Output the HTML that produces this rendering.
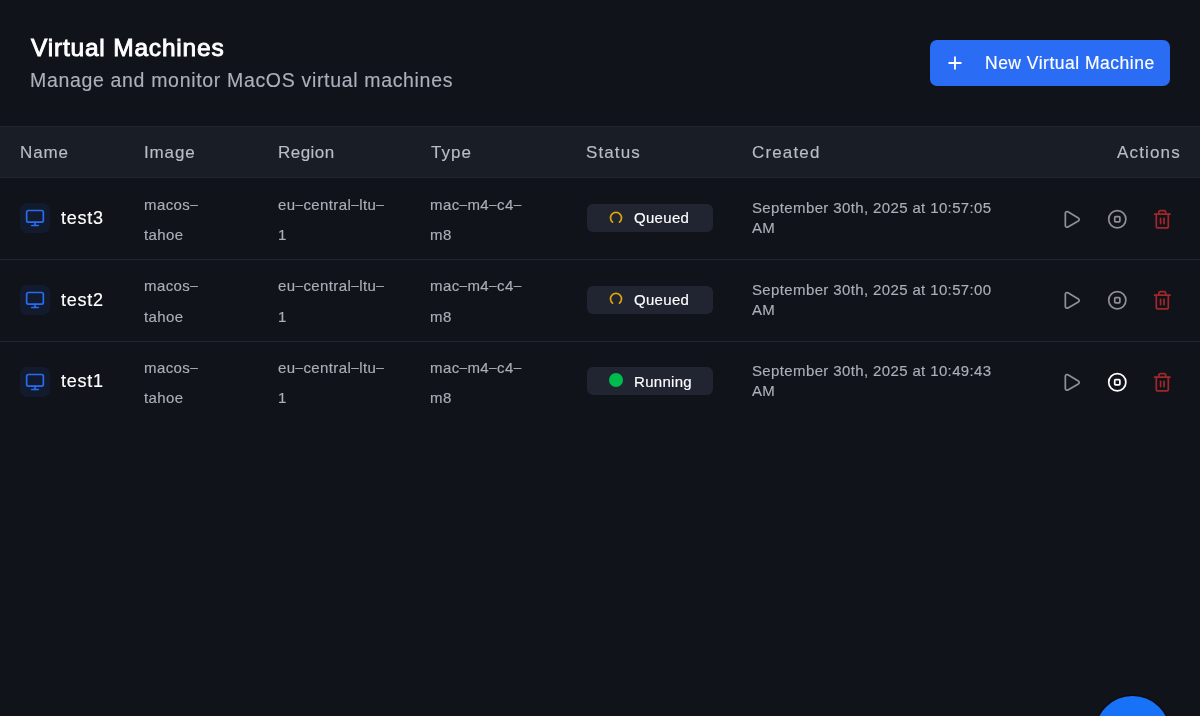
<!DOCTYPE html>
<html><head><meta charset="utf-8"><title>Virtual Machines</title>
<style>
html,body{margin:0;padding:0;width:1200px;height:716px;overflow:hidden;background:#10131a;}
body{position:relative;font-family:"Liberation Sans",sans-serif;}
.abs{position:absolute;}
.hy{font-size:13.5px;position:relative;top:-1.2px;}
.t{position:absolute;white-space:nowrap;will-change:transform;-webkit-text-stroke:0.15px currentColor;}
</style></head><body>
<div class="t" style="left:30.8px;top:36.06px;font-size:24.5px;line-height:24.5px;color:#ffffff;font-weight:400;letter-spacing:0.8px;-webkit-text-stroke:0.9px #fff;">Virtual Machines</div>
<div class="t" style="left:29.9px;top:70.79px;font-size:19.5px;line-height:19.5px;color:#abb0ba;font-weight:400;letter-spacing:0.67px;">Manage and monitor MacOS virtual machines</div>
<div class="abs" style="left:930px;top:40px;width:240px;height:45.5px;border-radius:7px;background:#2a6df4"></div>
<svg class="abs" style="left:948px;top:56.3px" width="14" height="14" viewBox="0 0 14 14"><path d="M7 0.5v13M0.5 7h13" stroke="#fff" stroke-width="1.8" stroke-linecap="butt" fill="none"/></svg>
<div class="t" style="left:984.9px;top:55.19px;font-size:17.5px;line-height:17.5px;color:#ffffff;font-weight:400;letter-spacing:0.5px;">New Virtual Machine</div>
<div class="abs" style="left:0;top:126px;width:1200px;height:52px;background:#191d26;border-top:1px solid #22252f;border-bottom:1px solid #22252f;box-sizing:border-box"></div>
<div class="t" style="left:19.7px;top:144.21px;font-size:17px;line-height:17px;color:#b9bdc6;font-weight:400;letter-spacing:0.85px;">Name</div>
<div class="t" style="left:143.7px;top:144.21px;font-size:17px;line-height:17px;color:#b9bdc6;font-weight:400;letter-spacing:0.85px;">Image</div>
<div class="t" style="left:278.4px;top:144.21px;font-size:17px;line-height:17px;color:#b9bdc6;font-weight:400;letter-spacing:0.45px;">Region</div>
<div class="t" style="left:430.6px;top:144.21px;font-size:17px;line-height:17px;color:#b9bdc6;font-weight:400;letter-spacing:1.0px;">Type</div>
<div class="t" style="left:586.0px;top:144.21px;font-size:17px;line-height:17px;color:#b9bdc6;font-weight:400;letter-spacing:1.1px;">Status</div>
<div class="t" style="left:752.1px;top:144.21px;font-size:17px;line-height:17px;color:#b9bdc6;font-weight:400;letter-spacing:1.15px;">Created</div>
<div class="t" style="left:1116.6px;top:144.21px;font-size:17px;line-height:17px;color:#b9bdc6;font-weight:400;letter-spacing:1.15px;">Actions</div>
<div class="abs" style="left:0;top:258.9px;width:1200px;height:1px;background:#22252f"></div>
<div class="abs" style="left:20.2px;top:203.3px;width:30px;height:30px;border-radius:7px;background:#121b2e"></div>
<svg class="abs" style="left:25.2px;top:208.3px" width="20" height="20" viewBox="0 0 24 24" fill="none" stroke="#2a6cf0" stroke-width="2" stroke-linecap="round" stroke-linejoin="round"><rect width="20" height="14" x="2" y="3" rx="2"/><line x1="8" x2="16" y1="21" y2="21"/><line x1="12" x2="12" y1="17" y2="21"/></svg>
<div class="t" style="left:60.9px;top:208.96px;font-size:18px;line-height:18px;color:#ffffff;font-weight:400;letter-spacing:0.75px;">test3</div>
<div class="t" style="left:143.75px;top:196.70px;font-size:15px;line-height:15px;color:#abafb7;font-weight:400;letter-spacing:0.4px;">macos<span class="hy">&ndash;</span></div>
<div class="t" style="left:143.75px;top:226.90px;font-size:15px;line-height:15px;color:#abafb7;font-weight:400;letter-spacing:0.4px;">tahoe</div>
<div class="t" style="left:277.9px;top:196.70px;font-size:15px;line-height:15px;color:#abafb7;font-weight:400;letter-spacing:0.4px;">eu<span class="hy">&ndash;</span>central<span class="hy">&ndash;</span>ltu<span class="hy">&ndash;</span></div>
<div class="t" style="left:277.9px;top:226.90px;font-size:15px;line-height:15px;color:#abafb7;font-weight:400;letter-spacing:0.4px;">1</div>
<div class="t" style="left:430px;top:196.70px;font-size:15px;line-height:15px;color:#abafb7;font-weight:400;letter-spacing:0.4px;">mac<span class="hy">&ndash;</span>m4<span class="hy">&ndash;</span>c4<span class="hy">&ndash;</span></div>
<div class="t" style="left:430px;top:226.90px;font-size:15px;line-height:15px;color:#abafb7;font-weight:400;letter-spacing:0.4px;">m8</div>
<div class="abs" style="left:587px;top:204.0px;width:125.5px;height:28px;border-radius:6px;background:#212532"></div>
<svg class="abs" style="left:608.2px;top:209.6px" width="16" height="16" viewBox="0 0 16 16"><path d="M4.5 12.2 A5.5 5.5 0 1 1 11.5 12.2" stroke="#e0a40c" stroke-width="1.7" fill="none" stroke-linecap="round"/></svg>
<div class="t" style="left:634.25px;top:210.30px;font-size:15px;line-height:15px;color:#ffffff;font-weight:400;letter-spacing:0.3px;">Queued</div>
<div class="t" style="left:752.4px;top:200.20px;font-size:15px;line-height:15px;color:#abafb7;font-weight:400;letter-spacing:0.37px;">September 30th, 2025 at 10:57:05</div>
<div class="t" style="left:752.4px;top:220.20px;font-size:15px;line-height:15px;color:#abafb7;font-weight:400;letter-spacing:0.3px;">AM</div>
<svg class="abs" style="left:1061.4px;top:208.5px" width="20.8" height="20.8" viewBox="0 0 24 24" fill="none" stroke="#8e9095" stroke-width="2" stroke-linecap="round" stroke-linejoin="round"><path d="M5 5a2 2 0 0 1 3.008-1.728l11.997 6.998a2 2 0 0 1 .003 3.458l-12 7A2 2 0 0 1 5 19z"/></svg>
<svg class="abs" style="left:1106.7px;top:208.7px" width="20.6" height="20.6" viewBox="0 0 24 24" fill="none" stroke="#8e9095" stroke-width="2" stroke-linecap="round" stroke-linejoin="round"><circle cx="12" cy="12" r="10"/><rect x="9" y="9" width="6" height="6" rx="1"/></svg>
<svg class="abs" style="left:1152px;top:208.55px" width="20.6" height="20.6" viewBox="0 0 24 24" fill="none" stroke="#a3262a" stroke-width="2" stroke-linecap="round" stroke-linejoin="round"><path d="M3 6h18"/><path d="M19 6v14c0 1-1 2-2 2H7c-1 0-2-1-2-2V6"/><path d="M8 6V4c0-1 1-2 2-2h4c1 0 2 1 2 2v2"/><line x1="10" x2="10" y1="11" y2="17"/><line x1="14" x2="14" y1="11" y2="17"/></svg>
<div class="abs" style="left:0;top:340.5px;width:1200px;height:1px;background:#22252f"></div>
<div class="abs" style="left:20.2px;top:284.9px;width:30px;height:30px;border-radius:7px;background:#121b2e"></div>
<svg class="abs" style="left:25.2px;top:289.9px" width="20" height="20" viewBox="0 0 24 24" fill="none" stroke="#2a6cf0" stroke-width="2" stroke-linecap="round" stroke-linejoin="round"><rect width="20" height="14" x="2" y="3" rx="2"/><line x1="8" x2="16" y1="21" y2="21"/><line x1="12" x2="12" y1="17" y2="21"/></svg>
<div class="t" style="left:60.9px;top:290.56px;font-size:18px;line-height:18px;color:#ffffff;font-weight:400;letter-spacing:0.75px;">test2</div>
<div class="t" style="left:143.75px;top:278.30px;font-size:15px;line-height:15px;color:#abafb7;font-weight:400;letter-spacing:0.4px;">macos<span class="hy">&ndash;</span></div>
<div class="t" style="left:143.75px;top:308.50px;font-size:15px;line-height:15px;color:#abafb7;font-weight:400;letter-spacing:0.4px;">tahoe</div>
<div class="t" style="left:277.9px;top:278.30px;font-size:15px;line-height:15px;color:#abafb7;font-weight:400;letter-spacing:0.4px;">eu<span class="hy">&ndash;</span>central<span class="hy">&ndash;</span>ltu<span class="hy">&ndash;</span></div>
<div class="t" style="left:277.9px;top:308.50px;font-size:15px;line-height:15px;color:#abafb7;font-weight:400;letter-spacing:0.4px;">1</div>
<div class="t" style="left:430px;top:278.30px;font-size:15px;line-height:15px;color:#abafb7;font-weight:400;letter-spacing:0.4px;">mac<span class="hy">&ndash;</span>m4<span class="hy">&ndash;</span>c4<span class="hy">&ndash;</span></div>
<div class="t" style="left:430px;top:308.50px;font-size:15px;line-height:15px;color:#abafb7;font-weight:400;letter-spacing:0.4px;">m8</div>
<div class="abs" style="left:587px;top:285.6px;width:125.5px;height:28px;border-radius:6px;background:#212532"></div>
<svg class="abs" style="left:608.2px;top:291.2px" width="16" height="16" viewBox="0 0 16 16"><path d="M4.5 12.2 A5.5 5.5 0 1 1 11.5 12.2" stroke="#e0a40c" stroke-width="1.7" fill="none" stroke-linecap="round"/></svg>
<div class="t" style="left:634.25px;top:291.90px;font-size:15px;line-height:15px;color:#ffffff;font-weight:400;letter-spacing:0.3px;">Queued</div>
<div class="t" style="left:752.4px;top:281.80px;font-size:15px;line-height:15px;color:#abafb7;font-weight:400;letter-spacing:0.37px;">September 30th, 2025 at 10:57:00</div>
<div class="t" style="left:752.4px;top:301.80px;font-size:15px;line-height:15px;color:#abafb7;font-weight:400;letter-spacing:0.3px;">AM</div>
<svg class="abs" style="left:1061.4px;top:290.1px" width="20.8" height="20.8" viewBox="0 0 24 24" fill="none" stroke="#8e9095" stroke-width="2" stroke-linecap="round" stroke-linejoin="round"><path d="M5 5a2 2 0 0 1 3.008-1.728l11.997 6.998a2 2 0 0 1 .003 3.458l-12 7A2 2 0 0 1 5 19z"/></svg>
<svg class="abs" style="left:1106.7px;top:290.29999999999995px" width="20.6" height="20.6" viewBox="0 0 24 24" fill="none" stroke="#8e9095" stroke-width="2" stroke-linecap="round" stroke-linejoin="round"><circle cx="12" cy="12" r="10"/><rect x="9" y="9" width="6" height="6" rx="1"/></svg>
<svg class="abs" style="left:1152px;top:290.15px" width="20.6" height="20.6" viewBox="0 0 24 24" fill="none" stroke="#a3262a" stroke-width="2" stroke-linecap="round" stroke-linejoin="round"><path d="M3 6h18"/><path d="M19 6v14c0 1-1 2-2 2H7c-1 0-2-1-2-2V6"/><path d="M8 6V4c0-1 1-2 2-2h4c1 0 2 1 2 2v2"/><line x1="10" x2="10" y1="11" y2="17"/><line x1="14" x2="14" y1="11" y2="17"/></svg>
<div class="abs" style="left:20.2px;top:366.5px;width:30px;height:30px;border-radius:7px;background:#121b2e"></div>
<svg class="abs" style="left:25.2px;top:371.5px" width="20" height="20" viewBox="0 0 24 24" fill="none" stroke="#2a6cf0" stroke-width="2" stroke-linecap="round" stroke-linejoin="round"><rect width="20" height="14" x="2" y="3" rx="2"/><line x1="8" x2="16" y1="21" y2="21"/><line x1="12" x2="12" y1="17" y2="21"/></svg>
<div class="t" style="left:60.9px;top:372.16px;font-size:18px;line-height:18px;color:#ffffff;font-weight:400;letter-spacing:0.75px;">test1</div>
<div class="t" style="left:143.75px;top:359.90px;font-size:15px;line-height:15px;color:#abafb7;font-weight:400;letter-spacing:0.4px;">macos<span class="hy">&ndash;</span></div>
<div class="t" style="left:143.75px;top:390.10px;font-size:15px;line-height:15px;color:#abafb7;font-weight:400;letter-spacing:0.4px;">tahoe</div>
<div class="t" style="left:277.9px;top:359.90px;font-size:15px;line-height:15px;color:#abafb7;font-weight:400;letter-spacing:0.4px;">eu<span class="hy">&ndash;</span>central<span class="hy">&ndash;</span>ltu<span class="hy">&ndash;</span></div>
<div class="t" style="left:277.9px;top:390.10px;font-size:15px;line-height:15px;color:#abafb7;font-weight:400;letter-spacing:0.4px;">1</div>
<div class="t" style="left:430px;top:359.90px;font-size:15px;line-height:15px;color:#abafb7;font-weight:400;letter-spacing:0.4px;">mac<span class="hy">&ndash;</span>m4<span class="hy">&ndash;</span>c4<span class="hy">&ndash;</span></div>
<div class="t" style="left:430px;top:390.10px;font-size:15px;line-height:15px;color:#abafb7;font-weight:400;letter-spacing:0.4px;">m8</div>
<div class="abs" style="left:587px;top:367.2px;width:125.5px;height:28px;border-radius:6px;background:#212532"></div>
<div class="abs" style="left:608.7px;top:373.09999999999997px;width:14.2px;height:14.2px;border-radius:50%;background:#00bb4e"></div>
<div class="t" style="left:634.25px;top:373.50px;font-size:15px;line-height:15px;color:#ffffff;font-weight:400;letter-spacing:0.3px;">Running</div>
<div class="t" style="left:752.4px;top:363.40px;font-size:15px;line-height:15px;color:#abafb7;font-weight:400;letter-spacing:0.37px;">September 30th, 2025 at 10:49:43</div>
<div class="t" style="left:752.4px;top:383.40px;font-size:15px;line-height:15px;color:#abafb7;font-weight:400;letter-spacing:0.3px;">AM</div>
<svg class="abs" style="left:1061.4px;top:371.7px" width="20.8" height="20.8" viewBox="0 0 24 24" fill="none" stroke="#8e9095" stroke-width="2" stroke-linecap="round" stroke-linejoin="round"><path d="M5 5a2 2 0 0 1 3.008-1.728l11.997 6.998a2 2 0 0 1 .003 3.458l-12 7A2 2 0 0 1 5 19z"/></svg>
<svg class="abs" style="left:1106.7px;top:371.9px" width="20.6" height="20.6" viewBox="0 0 24 24" fill="none" stroke="#ffffff" stroke-width="2" stroke-linecap="round" stroke-linejoin="round"><circle cx="12" cy="12" r="10"/><rect x="9" y="9" width="6" height="6" rx="1"/></svg>
<svg class="abs" style="left:1152px;top:371.75px" width="20.6" height="20.6" viewBox="0 0 24 24" fill="none" stroke="#a3262a" stroke-width="2" stroke-linecap="round" stroke-linejoin="round"><path d="M3 6h18"/><path d="M19 6v14c0 1-1 2-2 2H7c-1 0-2-1-2-2V6"/><path d="M8 6V4c0-1 1-2 2-2h4c1 0 2 1 2 2v2"/><line x1="10" x2="10" y1="11" y2="17"/><line x1="14" x2="14" y1="11" y2="17"/></svg>
<div class="abs" style="left:1094.7px;top:695.6px;width:75px;height:75px;border-radius:50%;background:#1872f7;box-shadow:0 0 0 1.5px rgba(0,0,0,0.35)"></div>
</body></html>
